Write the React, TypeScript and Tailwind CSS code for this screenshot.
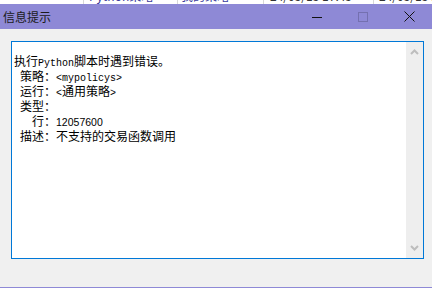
import React from 'react';

const cjk = { fontFamily: '"Noto Sans CJK SC", sans-serif' };
const mono = { fontFamily: '"Liberation Mono", "Noto Sans CJK SC", monospace' };

function Latin({ children }: { children: React.ReactNode }) {
  return (
    <span className="text-[10px]" style={mono}>
      {children}
    </span>
  );
}

export default function App() {
  return (
    <div className="w-[432px] h-[288px] bg-[#f0f0f0] flex flex-col overflow-hidden" style={cjk}>
      {/* strip of the list behind the dialog */}
      <div className="h-[4px] bg-white overflow-hidden shrink-0">
        <div className="flex h-[16px] -mt-[12px] text-[12px] leading-[16px] text-[#333]">
          <div className="w-[83px] shrink-0" />
          <div className="w-[94px] shrink-0 border-l border-[#d8d8d8] pl-[5px] text-[#3b3b9c]">Python策略</div>
          <div className="w-[86px] shrink-0 border-l border-[#d8d8d8] pl-[3px] text-[#3b3b9c]">我的策略</div>
          <div className="w-[110px] shrink-0 border-l border-[#d8d8d8] pl-[6px]">24/05/15 17:45</div>
          <div className="flex-1 border-l border-[#d8d8d8] pl-[5px] whitespace-nowrap">24/05/15 17:45</div>
        </div>
      </div>

      {/* title bar */}
      <div className="h-[25px] bg-[#8e89d6] flex items-center shrink-0">
        <div className="pl-[3px] text-[12px] text-[#1b1b1b] flex-1">信息提示</div>
        <div className="w-[46px] h-full flex items-center justify-center">
          <div className="w-[10px] h-px bg-[#111] mt-[1px]" />
        </div>
        <div className="w-[46px] h-full flex items-center justify-center">
          <div className="w-[10px] h-[10px] border border-[#7470b0]" />
        </div>
        <div className="w-[46px] h-full flex items-center justify-center">
          <svg width="11" height="11" viewBox="0 0 11 11">
            <path d="M0.5 0.5 L10.5 10.5 M10.5 0.5 L0.5 10.5" stroke="#111" strokeWidth="1" />
          </svg>
        </div>
      </div>

      {/* body */}
      <div className="flex-1 pt-[12px] pl-[11px] pr-[8px]">
        <div className="h-[218px] border border-[#0078d7] bg-white flex">
          <div className="flex-1 pl-[2px] pt-[13px] text-[12px] leading-[12px] text-black whitespace-pre">
            <div>执行<Latin>Python</Latin>脚本时遇到错误。</div>
            <div><Latin> </Latin>策略：<Latin>&lt;mypolicys&gt;</Latin></div>
            <div><Latin> </Latin>运行：<Latin>&lt;</Latin>通用策略<Latin>&gt;</Latin></div>
            <div><Latin> </Latin>类型：</div>
            <div><Latin>   </Latin>行：<span className="text-[10.5px]" style={{ fontFamily: '"Liberation Sans", sans-serif' }}>12057600</span></div>
            <div><Latin> </Latin>描述：不支持的交易函数调用</div>
          </div>
          <div className="w-[17px] bg-[#eeeeee] flex flex-col items-center justify-between py-[7px]">
            <svg width="9" height="6" viewBox="0 0 9 6">
              <path d="M1 5 L4.5 1.5 L8 5" stroke="#bdbdbd" strokeWidth="2" fill="none" />
            </svg>
            <svg width="9" height="6" viewBox="0 0 9 6">
              <path d="M1 1 L4.5 4.5 L8 1" stroke="#bdbdbd" strokeWidth="2" fill="none" />
            </svg>
          </div>
        </div>
      </div>
      <div className="h-px bg-[#8e89d6] shrink-0" />
    </div>
  );
}
